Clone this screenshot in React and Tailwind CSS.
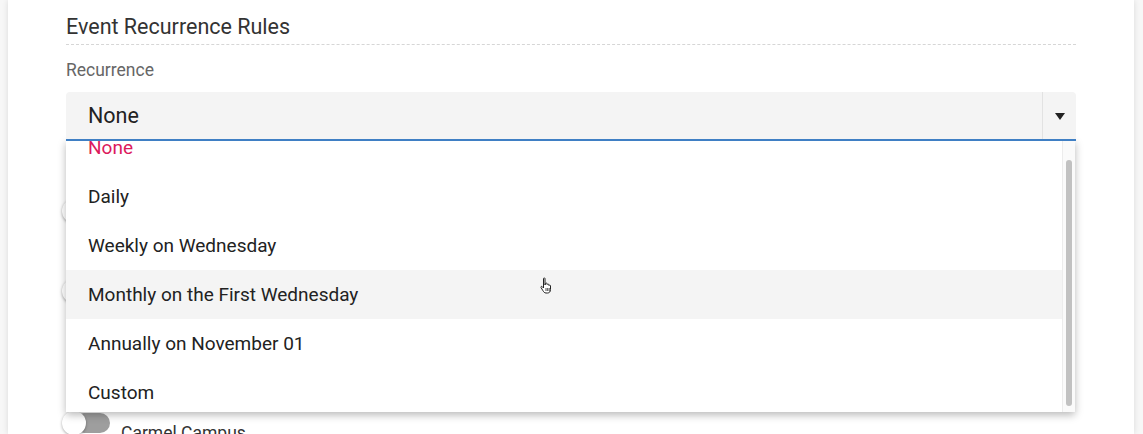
import React from "react";

const items = [
  "None",
  "Daily",
  "Weekly on Wednesday",
  "Monthly on the First Wednesday",
  "Annually on November 01",
  "Custom",
];

function Toggle() {
  return (
    <div className="relative w-[48px] h-[24px] shrink-0">
      <div className="absolute left-[12px] top-[2px] w-[36px] h-[20px] rounded-full bg-[#9e9e9e]" />
      <div className="absolute left-0 top-0 w-[24px] h-[24px] rounded-full bg-white shadow-[0_1px_3px_rgba(0,0,0,0.35)]" />
    </div>
  );
}

export default function App() {
  return (
    <div
      className="relative w-[1143px] h-[434px] overflow-hidden bg-[#f7f7f7]"
      style={{ fontFamily: "Roboto, 'Liberation Sans', sans-serif" }}
    >
      <div className="ml-[8px] w-[1126px] h-full bg-white shadow-[0_0_6px_rgba(0,0,0,0.12)] px-[58px]">
        <div className="pt-[14px] pb-[4px] border-b border-dashed border-[#d6d6d6] text-[21.5px] leading-[26px] text-[#333]">
          Event Recurrence Rules
        </div>
        <div className="mt-[14px] text-[17.5px] leading-[22px] text-[#666]">Recurrence</div>
        <div className="mt-[11px] relative z-10 flex h-[49px] bg-[#f4f4f4] rounded-t-[4px] border-b-2 border-[#3f7fc4]">
          <div className="flex-1 flex items-center pl-[22px] pt-[2px] text-[21.5px] text-[#222]">None</div>
          <div className="w-[34px] border-l border-[#e2e2e2] flex items-center justify-center pt-[2px]">
            <svg width="10" height="7" viewBox="0 0 10 7">
              <path d="M0 0 L10 0 L5 7 Z" fill="#222" />
            </svg>
          </div>
        </div>
        <div className="-ml-[4px] mt-[58px] flex flex-col gap-[56px]">
          <Toggle />
          <Toggle />
          <div className="mt-[52px] flex items-start gap-[11px]">
            <Toggle />
            <div className="pt-[11px] text-[17.5px] leading-[22px] text-[#333]">Carmel Campus</div>
          </div>
        </div>
      </div>

      <div className="absolute left-[66px] top-[140px] w-[1009px] h-[272px] bg-white shadow-[0_3px_8px_rgba(0,0,0,0.28)] overflow-hidden">
        <div className="-mt-[17px] pr-[13px]">
          {items.map((it, i) => (
            <div
              key={it}
              className={`h-[49px] flex items-center pl-[22px] pt-[1px] text-[19px] ${
                i === 0 ? "text-[#dc1a5c]" : "text-[#222]"
              } ${i === 3 ? "bg-[#f4f4f4]" : ""}`}
            >
              {it}
            </div>
          ))}
        </div>
        <div className="absolute right-0 top-0 w-[13px] h-full bg-[#fafafa] border-l border-[#ececec]">
          <div className="absolute left-[3px] top-[20px] w-[6px] h-[246px] rounded-full bg-[#c1c1c1]" />
        </div>
      </div>

      <svg className="absolute left-[539px] top-[277px]" width="16" height="18" viewBox="0 0 16 18">
        <path
          d="M4.5 1.5 C4.5 0.8 6 0.8 6 1.5 L6 8 L6.5 6.5 C6.8 5.8 8 5.8 8 6.8 L8.2 7.5 C8.5 6.8 9.7 6.8 9.8 7.8 L10 8.5 C10.3 7.8 11.5 7.9 11.5 8.9 L11.5 12.5 C11.5 14.5 10.5 16 8.5 16 L7 16 C5.5 16 4.8 15 4 13.8 L2 10.5 C1.6 9.8 2.5 9 3.2 9.6 L4.5 11 Z"
          fill="white"
          stroke="#222"
          strokeWidth="1"
        />
        <path d="M7 11 L7 14 M8.7 11 L8.7 14 M10.2 11 L10.2 14" stroke="#222" strokeWidth="0.8" />
      </svg>
    </div>
  );
}
